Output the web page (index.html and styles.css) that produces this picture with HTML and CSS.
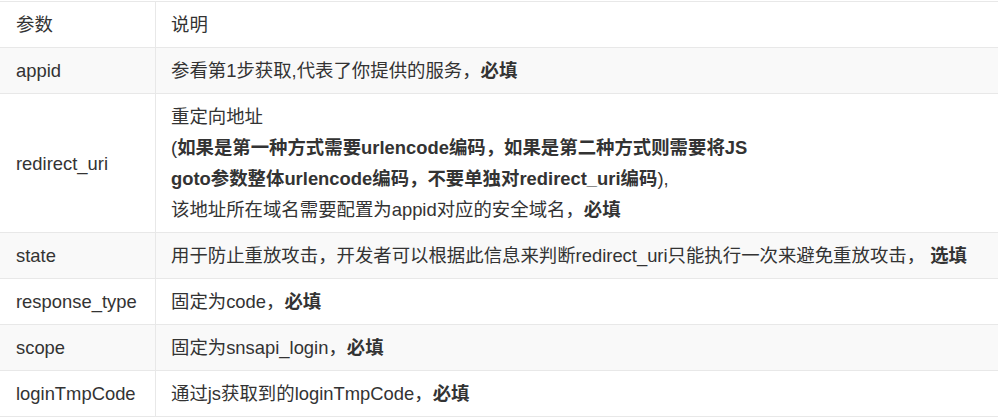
FILE: index.html
```html
<!DOCTYPE html>
<html lang="zh-CN">
<head>
<meta charset="utf-8">
<title>参数说明</title>
<link rel="stylesheet" href="styles.css">
</head>
<body>
<table class="params">
  <thead>
    <tr><th class="name">参数</th><th class="desc">说明</th></tr>
  </thead>
  <tbody>
    <tr class="alt"><td class="name">appid</td><td class="desc">参看第1步获取,代表了你提供的服务，<b>必填</b></td></tr>
    <tr><td class="name">redirect_uri</td><td class="desc">重定向地址<br>(<b>如果是第一种方式需要urlencode编码，如果是第二种方式则需要将JS<br>goto参数整体urlencode编码，不要单独对redirect_uri编码</b>),<br>该地址所在域名需要配置为appid对应的安全域名，<b>必填</b></td></tr>
    <tr class="alt"><td class="name">state</td><td class="desc">用于防止重放攻击，开发者可以根据此信息来判断redirect_uri只能执行一次来避免重放攻击， <b>选填</b></td></tr>
    <tr><td class="name">response_type</td><td class="desc">固定为code，<b>必填</b></td></tr>
    <tr class="alt"><td class="name">scope</td><td class="desc">固定为snsapi_login，<b>必填</b></td></tr>
    <tr><td class="name">loginTmpCode</td><td class="desc">通过js获取到的loginTmpCode，<b>必填</b></td></tr>
  </tbody>
</table>
</body>
</html>
```
FILE: styles.css
```css
html, body {
  margin: 0;
  padding: 0;
  background: #ffffff;
}
body {
  padding-top: 1px;
  font-family: "Liberation Sans", "Noto Sans CJK SC", sans-serif;
  font-size: 18.4px;
  line-height: 31px;
  color: #333333;
}
.params {
  width: 100%;
  border-collapse: separate;
  border-spacing: 0;
  border-top: 1px solid #e8e8e8;
}
.params th,
.params td {
  text-align: left;
  font-weight: normal;
  vertical-align: middle;
  padding: 7px 16px;
  border-bottom: 1px solid #e8e8e8;
}
.params .name {
  width: 123px;
  border-right: 1px solid #e8e8e8;
  white-space: nowrap;
}
.params .desc {
  padding-left: 15px;
}
.params b {
  font-weight: bold;
}
.params tr.alt td {
  background: #f9f9f9;
}
```
